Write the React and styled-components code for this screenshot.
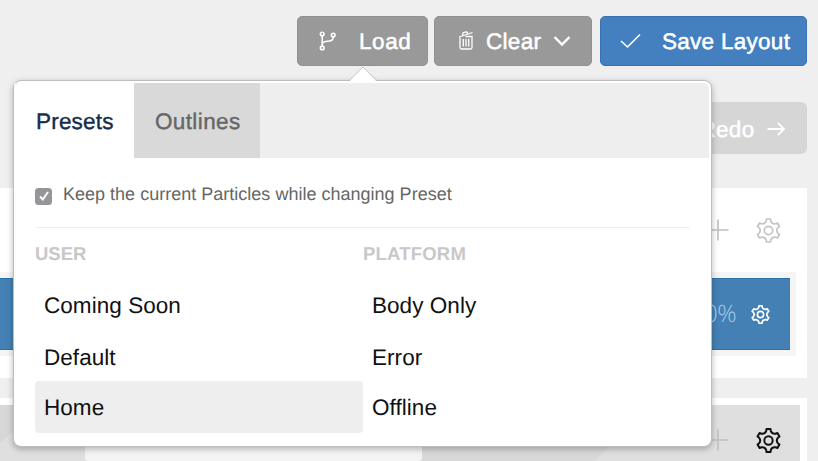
import React from "react";
import styled, { createGlobalStyle } from "styled-components";

const GlobalStyle = createGlobalStyle`
  *, *::before, *::after { box-sizing: border-box; }
  html, body { margin: 0; height: 100%; overflow: hidden; }
  body {
    background: #efefef;
    font-family: "Liberation Sans", Arial, sans-serif;
    text-rendering: geometricPrecision;
  }
`;

const Page = styled.div`
  position: relative;
  width: 818px;
  height: 461px;
  overflow: hidden;
  display: flex;
  flex-direction: column;
  background: #efefef;
`;

const Toolbar = styled.div`
  display: flex;
  flex-shrink: 0;
  justify-content: flex-end;
  height: 86px;
  padding: 16px 11.5px 20px 0;
`;

const Button = styled.button`
  display: flex;
  align-items: center;
  flex-shrink: 0;
  width: ${(p) => p.$width}px;
  height: 50px;
  margin: 0 0 0 ${(p) => p.$gap || 0}px;
  padding: 0 0 0 ${(p) => p.$inset}px;
  border: 1px solid ${(p) => (p.$primary ? "#3673b0" : "#919191")};
  border-radius: 5px;
  background: ${(p) => (p.$primary ? "#4480c0" : "#999999")};
  color: #fff;
  font: 22.5px "Liberation Sans", Arial, sans-serif;
  text-rendering: geometricPrecision;
`;

const ButtonLabel = styled.span`
  margin-left: ${(p) => p.$gap}px;
  padding-top: 2px;
  letter-spacing: ${(p) => p.$track}px;
  line-height: 28px;
  white-space: nowrap;
  -webkit-text-stroke: 0.5px currentColor;
`;

const ChevronSlot = styled.span`
  display: flex;
  margin-left: 12px;
`;

const HistoryBar = styled.div`
  display: flex;
  flex-shrink: 0;
  justify-content: flex-end;
  height: 102px;
  padding: 16px 11px 0 0;
`;

const RedoButton = styled(Button)`
  height: 52px;
  padding-top: 2px;
  border: 0;
  border-radius: 6px;
  background: #d6d6d6;
`;

const Section = styled.section`
  flex-shrink: 0;
  width: 807px;
  height: 190px;
  margin-bottom: 20px;
  background: #fff;
`;

const SectionActions = styled.div`
  display: flex;
  align-items: center;
  justify-content: flex-end;
  gap: 27px;
  height: 84px;
  padding-right: ${(p) => p.$right}px;
  color: #c4c4c4;
`;

const GridTrack = styled.div`
  width: 796px;
  height: 84px;
  padding: 6px 6px 6px 0;
  background: #f5f5f5;
`;

const Particle = styled.div`
  display: flex;
  align-items: center;
  justify-content: flex-end;
  gap: 15px;
  height: 72px;
  padding-right: 20px;
  border: solid #2a70ab;
  border-width: 1px 0;
  background: #4480b3;
  color: #fff;
`;

const Share = styled.span`
  padding-bottom: 1px;
  color: #a6c9e8;
  font: 300 24px "Open Sans", "Liberation Sans", sans-serif;
  letter-spacing: -0.5px;
`;

const OffcanvasSection = styled(Section)`
  height: 100px;
  padding: 7px 7px 0 0;
`;

const OffcanvasBody = styled.div`
  display: flex;
  flex-direction: column;
  height: 93px;
  background: linear-gradient(135deg, #d7d7d7 0 27px, #dfdfdf 27px 300px, #d8d8d8 300px 460px, #dfdfdf 460px);
`;

const OffcanvasActions = styled(SectionActions)`
  flex-shrink: 0;
  height: 70px;
  margin-bottom: -14px;
`;

const GearTint = styled.span`
  display: flex;
  color: ${(p) => p.$color};
`;

const ParticleShell = styled.div`
  flex-shrink: 0;
  width: 337px;
  height: 20px;
  margin: -20px 0 0 85px;
  border-radius: 4px;
  background: #f4f4f4;
`;

const Popover = styled.div`
  position: absolute;
  left: 13px;
  top: 80px;
  width: 699px;
  height: 367px;
  border: 1px solid #bdbdbd;
  border-radius: 8px;
  background: #fff;
  box-shadow: 0 2px 6px rgba(0, 0, 0, 0.28);
`;

const PopoverArrow = styled.svg`
  position: absolute;
  left: 334px;
  top: -15px;
  display: block;
`;

const Tabs = styled.div`
  display: flex;
  height: 75px;
  margin: 2px 2px 0 0;
  border-radius: 0 6px 0 0;
  background: #eeeeee;
`;

const Tab = styled.div`
  width: ${(p) => p.$width}px;
  height: 75px;
  padding-left: ${(p) => p.$inset}px;
  border-radius: ${(p) => (p.$active ? "6px 0 0 0" : "0")};
  background: ${(p) => (p.$active ? "#fff" : "#d9d9d9")};
  color: ${(p) => (p.$active ? "#142d49" : "#666")};
  font-size: 22.5px;
  line-height: 78px;
  letter-spacing: ${(p) => p.$track}px;
  -webkit-text-stroke: 0.4px currentColor;
`;

const KeepRow = styled.label`
  display: flex;
  align-items: center;
  gap: 11px;
  height: 70px;
  margin: 0 21px;
  padding-top: 4px;
  border-bottom: 1px solid #eeeeee;
  color: #666;
  font-size: 18px;
  letter-spacing: 0.01px;
`;

const Checkbox = styled.span`
  display: flex;
  align-items: center;
  justify-content: center;
  width: 17px;
  height: 17px;
  margin-top: 3px;
  border-radius: 3.5px;
  background: #95959a;
`;

const PresetGrid = styled.div`
  display: grid;
  grid-template-columns: 328px 328px;
  padding: 15px 21px 0;
`;

const GroupTitle = styled.div`
  height: 36px;
  color: #c8c8c8;
  font-size: 18.5px;
  font-weight: 700;
  line-height: 22px;
  letter-spacing: ${(p) => p.$track}px;
`;

const Preset = styled.div`
  height: ${(p) => p.$height || 52}px;
  padding: 0 9px;
  color: #111;
  font-size: 22.5px;
  line-height: 53px;
  letter-spacing: 0.05px;
`;

const ActivePreset = styled(Preset)`
  border-radius: 4px;
  background: #eeeeee;
`;

/* Six-toothed cog: narrow teeth joined by deep inward curves. */
const cogPath = (() => {
  const at = (r, deg) => {
    const a = ((deg - 90) * Math.PI) / 180;
    return `${(12 + r * Math.cos(a)).toFixed(2)} ${(12 + r * Math.sin(a)).toFixed(2)}`;
  };
  let d = "";
  for (let i = 0; i < 6; i += 1) {
    const c = i * 60;
    d += `${i ? "L" : "M"}${at(11.2, c - 10)} L${at(11.2, c + 10)} L${at(9.3, c + 14)} C${at(7.9, c + 22)} ${at(7.9, c + 38)} ${at(9.3, c + 46)} `;
  }
  return `${d}Z`;
})();

const Gear = ({ size = 25, weight = 1.6 }) => (
  <svg width={size} height={size} viewBox="0 0 24 24" fill="none" stroke="currentColor" strokeWidth={weight} strokeLinejoin="round">
    <path d={cogPath} />
    <circle cx="12" cy="12" r="4" />
  </svg>
);

const Plus = () => (
  <svg width="22" height="22" viewBox="0 0 22 22" stroke="#c0c0c0" strokeWidth="1.6">
    <path d="M11 0.5V21.5M0.5 11H21.5" />
  </svg>
);

const Branch = () => (
  <svg width="18" height="20" viewBox="0 0 18 20" fill="none" stroke="#fff" strokeWidth="1.6">
    <circle cx="3.2" cy="3.1" r="1.8" />
    <circle cx="3.2" cy="16.9" r="1.8" />
    <circle cx="14.2" cy="4.1" r="1.8" />
    <path d="M3.2 4.9V15.1M14.2 5.9C14.2 13.2 3.2 7.6 3.2 13.5" />
  </svg>
);

const Trash = () => (
  <svg width="16" height="20" viewBox="0 0 16 20" fill="none" stroke="#fff" strokeWidth="1.3">
    <path d="M1 6L14.5 1.5M5 4.6L4.7 2.8Q4.6 2.1 5.3 1.7L8.2 0.9Q8.9 0.8 9.2 1.5L9.6 3" />
    <path d="M2 6.5V16.5Q2 18 3.5 18H12.5Q14 18 14 16.5V5.5H7.5M5.3 8V15.5M8 8V15.5M10.7 8V15.5" />
  </svg>
);

export default function App() {
  return (
    <>
      <GlobalStyle />
      <Page>
        <Toolbar>
          <Button $width={131} $inset={21}>
            <Branch />
            <ButtonLabel $gap={22} $track={0.6}>Load</ButtonLabel>
          </Button>
          <Button $width={158} $gap={6} $inset={23}>
            <Trash />
            <ButtonLabel $gap={12} $track={0.3}>Clear</ButtonLabel>
            <ChevronSlot>
              <svg width="18" height="12" viewBox="0 0 18 12" fill="none" stroke="#fff" strokeWidth="2.4">
                <path d="M1.5 2L9 9.5L16.5 2" />
              </svg>
            </ChevronSlot>
          </Button>
          <Button $primary $width={206.5} $gap={8} $inset={19}>
            <svg width="21" height="16" viewBox="0 0 21 16" fill="none" stroke="#fff" strokeWidth="1.6">
              <path d="M1 8L7.5 14L20 1.5" />
            </svg>
            <ButtonLabel $gap={21} $track={0.28}>Save Layout</ButtonLabel>
          </Button>
        </Toolbar>
        <HistoryBar>
          <RedoButton $width={130} $inset={22.5}>
            <ButtonLabel $gap={0} $track={0.3}>Redo</ButtonLabel>
            <ChevronSlot>
              <svg width="18" height="14" viewBox="0 0 18 14" fill="none" stroke="#fff" strokeWidth="1.8">
                <path d="M0.5 7H17M10.8 0.8L17 7L10.8 13.2" />
              </svg>
            </ChevronSlot>
          </RedoButton>
        </HistoryBar>
        <Section>
          <SectionActions $right={26}>
            <Plus />
            <Gear />
          </SectionActions>
          <GridTrack>
            <Particle>
              <Share>100%</Share>
              <Gear size={19} weight={2.1} />
            </Particle>
          </GridTrack>
        </Section>
        <OffcanvasSection>
          <OffcanvasBody>
            <OffcanvasActions $right={19}>
              <Plus />
              <GearTint $color="#111"><Gear weight={1.9} /></GearTint>
            </OffcanvasActions>
            <ParticleShell />
          </OffcanvasBody>
        </OffcanvasSection>

        <Popover>
          <PopoverArrow width="30" height="17" viewBox="0 0 30 17">
            <path d="M0.5 16.5L15 1L29.5 16.5Z" fill="#fff" />
            <path d="M0.5 15L15 1L29.5 15" fill="none" stroke="#c6c6c6" />
          </PopoverArrow>
          <Tabs>
            <Tab $active $width={120.4} $inset={22} $track={0.2}>Presets</Tab>
            <Tab $width={126} $inset={20.5} $track={0.4}>Outlines</Tab>
          </Tabs>
          <KeepRow>
            <Checkbox>
              <svg width="12" height="12" viewBox="0 0 12 12" fill="none" stroke="#fff" strokeWidth="2">
                <path d="M2 6.5L4.8 9.5L10 2" />
              </svg>
            </Checkbox>
            Keep the current Particles while changing Preset
          </KeepRow>
          <PresetGrid>
            <GroupTitle $track={0}>USER</GroupTitle>
            <GroupTitle $track={0.2}>PLATFORM</GroupTitle>
            <Preset>Coming Soon</Preset>
            <Preset>Body Only</Preset>
            <Preset $height={50}>Default</Preset>
            <Preset $height={50}>Error</Preset>
            <ActivePreset>Home</ActivePreset>
            <Preset>Offline</Preset>
          </PresetGrid>
        </Popover>
      </Page>
    </>
  );
}
